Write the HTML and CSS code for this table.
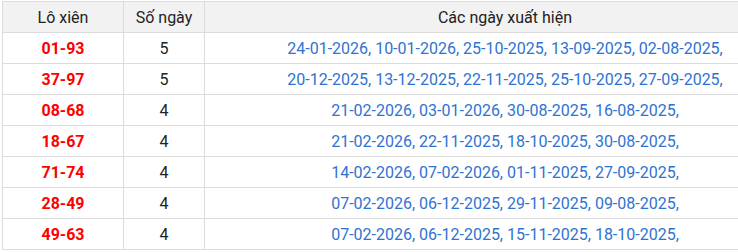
FILE: index.html
```html
<!DOCTYPE html>
<html lang="vi">
<head>
<meta charset="utf-8">
<link rel="stylesheet" href="styles.css">
</head>
<body>
<table class="xien">
  <thead>
    <tr><th class="c1">Lô xiên</th><th class="c2">Số ngày</th><th class="c3">Các ngày xuất hiện</th></tr>
  </thead>
  <tbody>
    <tr><td class="pair">01-93</td><td class="num">5</td><td class="dates">24-01-2026, 10-01-2026, 25-10-2025, 13-09-2025, 02-08-2025,</td></tr>
    <tr><td class="pair">37-97</td><td class="num">5</td><td class="dates">20-12-2025, 13-12-2025, 22-11-2025, 25-10-2025, 27-09-2025,</td></tr>
    <tr><td class="pair">08-68</td><td class="num">4</td><td class="dates">21-02-2026, 03-01-2026, 30-08-2025, 16-08-2025,</td></tr>
    <tr><td class="pair">18-67</td><td class="num">4</td><td class="dates">21-02-2026, 22-11-2025, 18-10-2025, 30-08-2025,</td></tr>
    <tr><td class="pair">71-74</td><td class="num">4</td><td class="dates">14-02-2026, 07-02-2026, 01-11-2025, 27-09-2025,</td></tr>
    <tr><td class="pair">28-49</td><td class="num">4</td><td class="dates">07-02-2026, 06-12-2025, 29-11-2025, 09-08-2025,</td></tr>
    <tr><td class="pair">49-63</td><td class="num">4</td><td class="dates">07-02-2026, 06-12-2025, 15-11-2025, 18-10-2025,</td></tr>
  </tbody>
</table>
</body>
</html>
```
FILE: styles.css
```css
html, body {
  margin: 0;
  padding: 0;
  background: #fff;
  overflow: hidden;
}
body {
  font-family: Roboto, "Liberation Sans", sans-serif;
  font-size: 16px;
  color: #222;
}
.xien {
  border-collapse: collapse;
  margin: 1px 0 0 2px;
  width: 804px;
  table-layout: fixed;
}
.xien th, .xien td {
  border: 1px solid #dcdcdc;
  height: 30px;
  padding: 0;
  text-align: center;
  vertical-align: middle;
  line-height: 19px;
  white-space: nowrap;
}
.xien th {
  background: #f2f2f2;
  font-weight: 400;
  color: #222;
}
.c1 { width: 120px; }
.c2 { width: 80px; }
.pair {
  color: #ff0000;
  font-weight: 700;
}
.num { color: #222; }
.dates { color: #2f73d2; }
```
